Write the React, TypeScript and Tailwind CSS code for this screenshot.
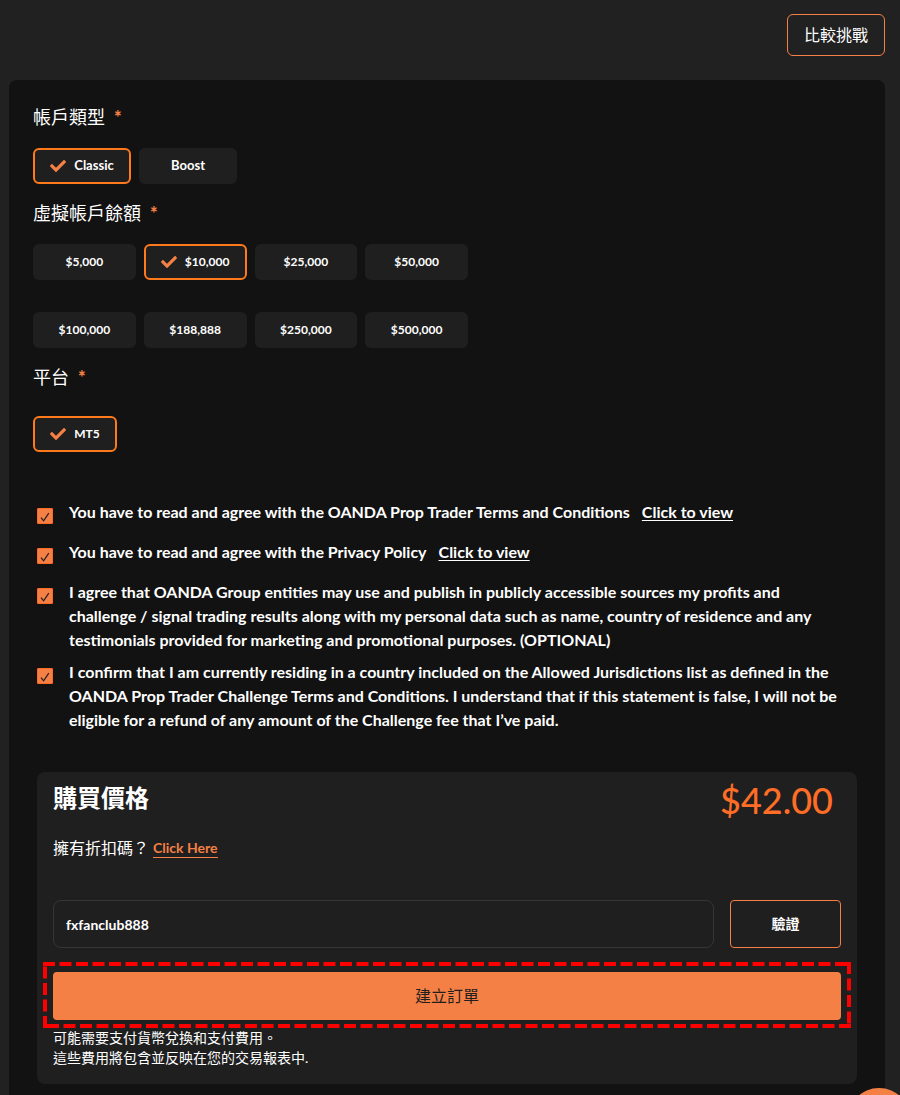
import { useState } from "react";
import type { ReactNode } from "react";
import clsx from "clsx";
import { FaCheck } from "react-icons/fa";

const balances = ["$5,000", "$10,000", "$25,000", "$50,000", "$100,000", "$188,888", "$250,000", "$500,000"];

function Heading({ children }: { children: ReactNode }) {
  return (
    <h2 className="text-lg leading-[27px] font-normal text-white">
      {children}
      <span className="ml-[9px] font-black text-[#f58045]">*</span>
    </h2>
  );
}

type OptionProps = {
  label: string;
  active: boolean;
  onSelect: () => void;
  className?: string;
};

function Option({ label, active, onSelect, className }: OptionProps) {
  return (
    <button
      type="button"
      aria-pressed={active}
      onClick={onSelect}
      className={clsx(
        "flex h-9 items-center justify-center gap-2 rounded-md border-2 bg-[#1f1f1f] font-bold text-white",
        active ? "border-[#ff7a1a]" : "border-transparent",
        className
      )}
    >
      {active && <FaCheck className="size-4 text-[#f58045]" />}
      {label}
    </button>
  );
}

function Consent({ id, children }: { id: string; children: ReactNode }) {
  return (
    <div className="flex min-h-8 items-start gap-4">
      <span className="relative mt-2 size-4 shrink-0">
        <input
          id={id}
          type="checkbox"
          defaultChecked
          className="peer block size-4 appearance-none rounded-[1px] border border-[#ff6a22] checked:bg-[#f58045]"
        />
        {/* Tick over the box */}
        <svg
          viewBox="0 0 16 16"
          className="pointer-events-none absolute inset-0 hidden size-4 peer-checked:block"
          fill="none"
          stroke="#1f1f1f"
          strokeWidth="1.2"
        >
          <path d="M4 9.6 6.6 12.8 11.8 5.2" />
        </svg>
      </span>
      <div className="text-base leading-6 font-bold text-white">{children}</div>
    </div>
  );
}

export default function App() {
  const [account, setAccount] = useState("Classic");
  const [balance, setBalance] = useState("$10,000");
  const [code, setCode] = useState("fxfanclub888");

  return (
    <div className="flex min-h-screen flex-col overflow-x-hidden bg-[#212121] pr-[15px] pl-[9px] font-['Lato','Noto_Sans_CJK_TC',sans-serif]">
      <header className="flex justify-end pt-[14px] pb-6">
        <button type="button" className="h-[42px] rounded-md border border-[#f58045] px-4 text-base text-white">
          比較挑戰
        </button>
      </header>

      <main className="flex flex-1 flex-col gap-4 rounded-t-lg bg-[#121212] px-6 pt-6 pb-2">
        <section className="flex flex-col gap-[17px]">
          <Heading>帳戶類型</Heading>
          <div className="flex gap-2">
            {["Classic", "Boost"].map((name) => (
              <Option
                key={name}
                label={name}
                active={account === name}
                onSelect={() => setAccount(name)}
                className="w-[98px] text-[13px]"
              />
            ))}
          </div>
        </section>

        <section className="flex flex-col gap-[17px]">
          <Heading>虛擬帳戶餘額</Heading>
          <div className="grid max-w-[435px] grid-cols-4 gap-x-2 gap-y-8">
            {balances.map((amount) => (
              <Option
                key={amount}
                label={amount}
                active={balance === amount}
                onSelect={() => setBalance(amount)}
                className="text-xs"
              />
            ))}
          </div>
        </section>

        <section className="flex flex-col gap-[25px]">
          <Heading>平台</Heading>
          <Option label="MT5" active onSelect={() => {}} className="w-[84px] text-xs" />
        </section>

        <section className="mx-1 mt-8 flex flex-col gap-2">
          <Consent id="terms">
            <label htmlFor="terms">You have to read and agree with the OANDA Prop Trader Terms and Conditions</label>
            <a href="#terms" className="ml-3 underline underline-offset-2">Click to view</a>
          </Consent>
          <Consent id="privacy">
            <label htmlFor="privacy">You have to read and agree with the Privacy Policy</label>
            <a href="#privacy" className="ml-3 underline underline-offset-2">Click to view</a>
          </Consent>
          <Consent id="publish">
            <label htmlFor="publish">
              I agree that OANDA Group entities may use and publish in publicly accessible sources my profits and
              <br />
              challenge / signal trading results along with my personal data such as name, country of residence and any
              <br />
              testimonials provided for marketing and promotional purposes. (OPTIONAL)
            </label>
          </Consent>
          <Consent id="residence">
            <label htmlFor="residence">
              I confirm that I am currently residing in a country included on the Allowed Jurisdictions list as defined in the
              <br />
              OANDA Prop Trader Challenge Terms and Conditions. I understand that if this statement is false, I will not be
              <br />
              eligible for a refund of any amount of the Challenge fee that I’ve paid.
            </label>
          </Consent>
        </section>

        <section className="mx-1 mt-6 rounded-lg bg-[#1f1f1f] px-4 pt-2 pb-4 text-white">
          <div className="flex items-start justify-between">
            <h2 className="text-2xl leading-9 font-bold">購買價格</h2>
            <span className="mr-2 text-4xl leading-10 font-medium text-[#ff6d26]">$42.00</span>
          </div>

          <p className="mt-4 flex h-6 items-center gap-1 text-base">
            擁有折扣碼？
            <a href="#coupon" className="border-b border-[#f58045] text-sm font-bold leading-[18px] text-[#f58045]">
              Click Here
            </a>
          </p>

          <div className="mt-10 flex gap-4">
            <input
              type="text"
              aria-label="折扣碼"
              value={code}
              onChange={(e) => setCode(e.target.value)}
              className="h-12 min-w-0 flex-1 rounded-lg border border-[#363636] bg-transparent px-3 text-sm font-bold text-white outline-none"
            />
            <button type="button" className="h-12 w-[111px] rounded border border-[#f58045] text-sm font-bold">
              驗證
            </button>
          </div>

          <div className="relative mt-6">
            <button type="submit" className="h-12 w-full rounded bg-[#f58045] text-base text-[#1f1f1f]">
              建立訂單
            </button>
            {/* Dashed highlight around the order button, every side starts at its own corner */}
            <div className="pointer-events-none absolute -inset-x-[10px] -top-[10px] -bottom-2">
              <svg className="size-full" stroke="#ff0000" strokeWidth="8" strokeDasharray="12 4.5">
                <line x1="0" y1="0" x2="100%" y2="0" />
                <line x1="100%" y1="0" x2="100%" y2="100%" />
                <line x1="100%" y1="100%" x2="0" y2="100%" />
                <line x1="0" y1="100%" x2="0" y2="0" />
              </svg>
            </div>
          </div>

          <p className="mt-2 text-sm leading-5">
            可能需要支付貨幣兌換和支付費用。
            <br />
            這些費用將包含並反映在您的交易報表中.
          </p>
        </section>
      </main>

      {/* Chat bubble, mostly below the fold */}
      <button
        type="button"
        aria-label="Chat"
        className="fixed -right-[11px] -bottom-[57px] size-16 rounded-full bg-[#f58045]"
      />
    </div>
  );
}
